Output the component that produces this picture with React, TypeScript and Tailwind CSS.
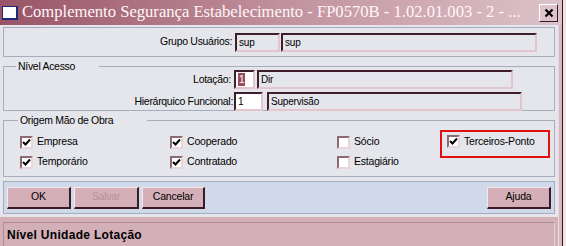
import React from 'react';

const UI = "font-['Liberation_Sans',Arial,sans-serif]";

function Field({ w, value, white, selected }: { w: string; value: string; white?: boolean; selected?: boolean }) {
  return (
    <div
      className={`h-[19px] ${w} flex items-center pl-[2px] text-[10px] tracking-[-0.2px] text-black border-2 border-t-[#3e1e2a] border-l-[#3e1e2a] border-b-[#e2c6cc] border-r-[#e2c6cc] ${white ? 'bg-white' : 'bg-[#e5e6eb]'}`}
    >
      {selected ? <span className="bg-[#9c4a5c] text-white px-[1px] leading-[13px]">{value}</span> : value}
    </div>
  );
}

function Check({ label, checked }: { label: string; checked: boolean }) {
  return (
    <div className="flex items-center gap-[4px] text-[10.5px] tracking-[-0.2px] text-black">
      <div className="w-[13px] h-[13px] bg-white border-2 border-t-[#8c6a74] border-l-[#8c6a74] border-b-[#ead6da] border-r-[#ead6da] flex items-center justify-center">
        {checked && (
          <svg width="9" height="9" viewBox="0 0 9 9">
            <path d="M1 4 L3.5 6.5 L8 1.5" stroke="#000" strokeWidth="2" fill="none" />
          </svg>
        )}
      </div>
      <span>{label}</span>
    </div>
  );
}

function Btn({ label, disabled, w = 'w-[64px]' }: { label: string; disabled?: boolean; w?: string }) {
  return (
    <div
      className={`h-[22px] ${w} flex items-center justify-center text-[10.5px] tracking-[-0.2px] bg-[#d4afb7] border-t border-l border-t-[#f6e8eb] border-l-[#f6e8eb] border-b-2 border-r-2 border-b-[#3a1a26] border-r-[#3a1a26] ${disabled ? 'text-[#b4929a]' : 'text-black'}`}
    >
      {label}
    </div>
  );
}

export default function App() {
  return (
    <div className={`w-[566px] h-[246px] flex overflow-hidden ${UI}`}>
      <div className="w-[563px] flex flex-col border-r border-r-[#2a1a20]">
        {/* title bar */}
        <div className="h-[26px] flex items-center bg-gradient-to-r from-[#985466] via-[#c1919d] to-[#dcc3ca] pl-[2px] pr-[4px]">
          <div className="w-[16px] h-[14px] bg-white border border-[#1c2a78] border-b-2 border-r-2 mr-[4px]" />
          <div className="flex-1 font-['Liberation_Serif',serif] text-[16.6px] text-[#fff6f8] whitespace-nowrap leading-none">
            Complemento Segurança Estabelecimento - FP0570B - 1.02.01.003 - 2 - ...
          </div>
          <div className="w-[19px] h-[18px] bg-[#dcc4ca] border border-t-white border-l-white border-b-[#3a1a26] border-r-[#3a1a26] flex items-center justify-center">
            <svg width="10" height="10" viewBox="0 0 10 10">
              <path d="M1.5 1.5 L8.5 8.5 M8.5 1.5 L1.5 8.5" stroke="#000" strokeWidth="2.2" />
            </svg>
          </div>
        </div>

        <div className="flex-1 flex">
          <div className="w-[558px] bg-[#e5e6eb] flex flex-col">
            {/* Grupo Usuários */}
            <div className="mt-[2px] mx-[3px] h-[30px] border border-[#a7adbb] flex items-center text-[10.5px] tracking-[-0.3px]">
              <div className="w-[230px] text-right pr-[2px]">Grupo Usuários:</div>
              <div className="ml-[1px] flex gap-[1px]">
                <Field w="w-[45px]" value="sup" />
                <Field w="w-[256px]" value="sup" />
              </div>
            </div>

            {/* Nível Acesso */}
            <fieldset className="mt-[2px] mx-[3px] h-[52px] border border-[#a7adbb]">
              <legend className="ml-[12px] pl-[2px] pr-[24px] text-[10.5px] tracking-[-0.3px] leading-[14px]">Nível Acesso</legend>
              <div className="flex flex-col gap-[3px] -mt-[3px] text-[10.5px] tracking-[-0.3px]">
                <div className="flex items-center">
                  <div className="w-[230px] text-right pr-[3px]">Lotação:</div>
                  <Field w="w-[21px]" value="1" white selected />
                  <div className="w-[2px]" />
                  <Field w="w-[256px]" value="Dir" />
                </div>
                <div className="flex items-center">
                  <div className="w-[230px] text-right pr-[1px]">Hierárquico Funcional:</div>
                  <Field w="w-[29px]" value="1" white />
                  <div className="w-[4px]" />
                  <Field w="w-[255px]" value="Supervisão" />
                </div>
              </div>
            </fieldset>

            {/* Origem Mão de Obra */}
            <fieldset className="mt-[2px] mx-[3px] h-[64px] border border-[#a7adbb]">
              <legend className="ml-[14px] pl-[2px] pr-[34px] text-[10.5px] tracking-[-0.3px] leading-[14px]">Origem Mão de Obra</legend>
              <div className="grid grid-cols-[150px_167px_103px_110px] grid-rows-[20px_20px] pl-[16px] mt-[5px]">
                <Check label="Empresa" checked />
                <Check label="Cooperado" checked />
                <Check label="Sócio" checked={false} />
                <div className="-mt-[2px] h-[28px] w-[110px] border-2 border-[#e01010] pl-[5px] pt-[2px] row-span-2 self-start">
                  <Check label="Terceiros-Ponto" checked />
                </div>
                <Check label="Temporário" checked />
                <Check label="Contratado" checked />
                <Check label="Estagiário" checked={false} />
              </div>
            </fieldset>

            {/* buttons */}
            <div className="mt-[4px] mx-[3px] h-[33px] bg-[#d0d9ea] border border-[#a4acc4] flex items-center px-[3px] gap-[3px]">
              <Btn label="OK" />
              <Btn label="Salvar" disabled w="w-[65px]" />
              <Btn label="Cancelar" w="w-[63px]" />
              <div className="flex-1" />
              <Btn label="Ajuda" />
            </div>

            {/* status */}
            <div className="mt-[3px] flex-1 bg-[#d3afb7] pt-[5px] px-[3px]">
              <div className="h-[24px] border border-t-[#b08a93] border-l-[#b08a93] border-r-[#e6ccd2] border-b-0 flex items-center pl-[3px] font-bold text-[12px] tracking-[0.3px] text-black">
                Nível Unidade Lotação
              </div>
            </div>
          </div>
          <div className="flex-1 bg-[#d8b8c0] border-l border-l-[#eadadd]" />
        </div>
      </div>
      <div className="flex-1 bg-[#f0e6e8]" />
    </div>
  );
}
